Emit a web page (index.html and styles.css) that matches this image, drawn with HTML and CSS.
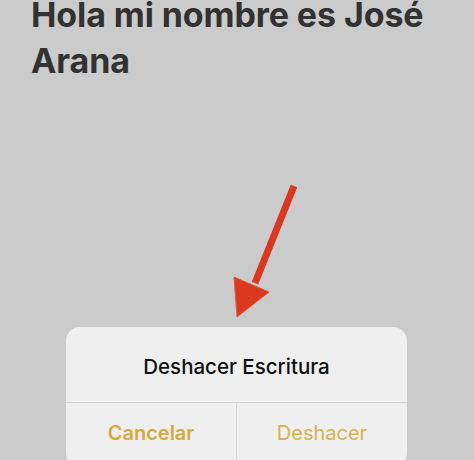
FILE: index.html
```html
<!DOCTYPE html>
<html lang="es">
<head>
<meta charset="utf-8">
<link rel="stylesheet" href="styles.css">
</head>
<body>
<div class="screen">
  <h1 class="note-title">Hola mi nombre es José Arana</h1>
  <div class="alert">
    <div class="alert-title">Deshacer Escritura</div>
    <div class="alert-actions">
      <button class="alert-btn alert-btn-cancel">Cancelar</button>
      <button class="alert-btn alert-btn-undo">Deshacer</button>
    </div>
  </div>
  <svg class="arrow" width="474" height="460" viewBox="0 0 474 460">
    <line x1="294" y1="186" x2="255" y2="283" stroke="#d8391f" stroke-width="7" stroke-linecap="butt"/>
    <polygon points="234,277 269,292 237,317" fill="#d8391f" stroke="#e0583a" stroke-width="1" stroke-linejoin="round"/>
  </svg>
</div>
</body>
</html>
```

FILE: styles.css
```css
* { box-sizing: border-box; }
html, body {
  margin: 0;
  padding: 0;
  background: #cbcbcb;
}
.screen {
  position: relative;
  width: 474px;
  height: 460px;
  overflow: hidden;
  font-family: Inter, "Liberation Sans", sans-serif;
}
.note-title {
  margin: 0;
  padding: 0 30px 0 31px;
  font-size: 34px;
  line-height: 46px;
  font-weight: 700;
  color: #323232;
  letter-spacing: -0.1px;
  margin-top: -8px;
}
.alert {
  margin: 243px 0 0 66px;
  width: 341px;
  height: 140px;
  background: #efefef;
  border-radius: 14px;
  display: flex;
  flex-direction: column;
}
.alert-title {
  height: 76px;
  display: flex;
  align-items: center;
  justify-content: center;
  padding-top: 4px;
  font-size: 20.5px;
  font-weight: 500;
  color: #111;
  border-bottom: 1px solid #d6d6d6;
}
.alert-actions {
  display: flex;
  flex: 1;
}
.alert-btn {
  flex: 1;
  border: 0;
  background: transparent;
  font-family: Inter, "Liberation Sans", sans-serif;
  font-size: 20px;
  color: #d8b24e;
  padding: 0;
  height: 60px;
}
.alert-btn-cancel {
  font-weight: 600;
  color: #d4aa3e;
  border-right: 1px solid #d6d6d6;
}
.alert-btn-undo {
  font-weight: 400;
}
.arrow {
  position: absolute;
  left: 0;
  top: 0;
  pointer-events: none;
}
```
